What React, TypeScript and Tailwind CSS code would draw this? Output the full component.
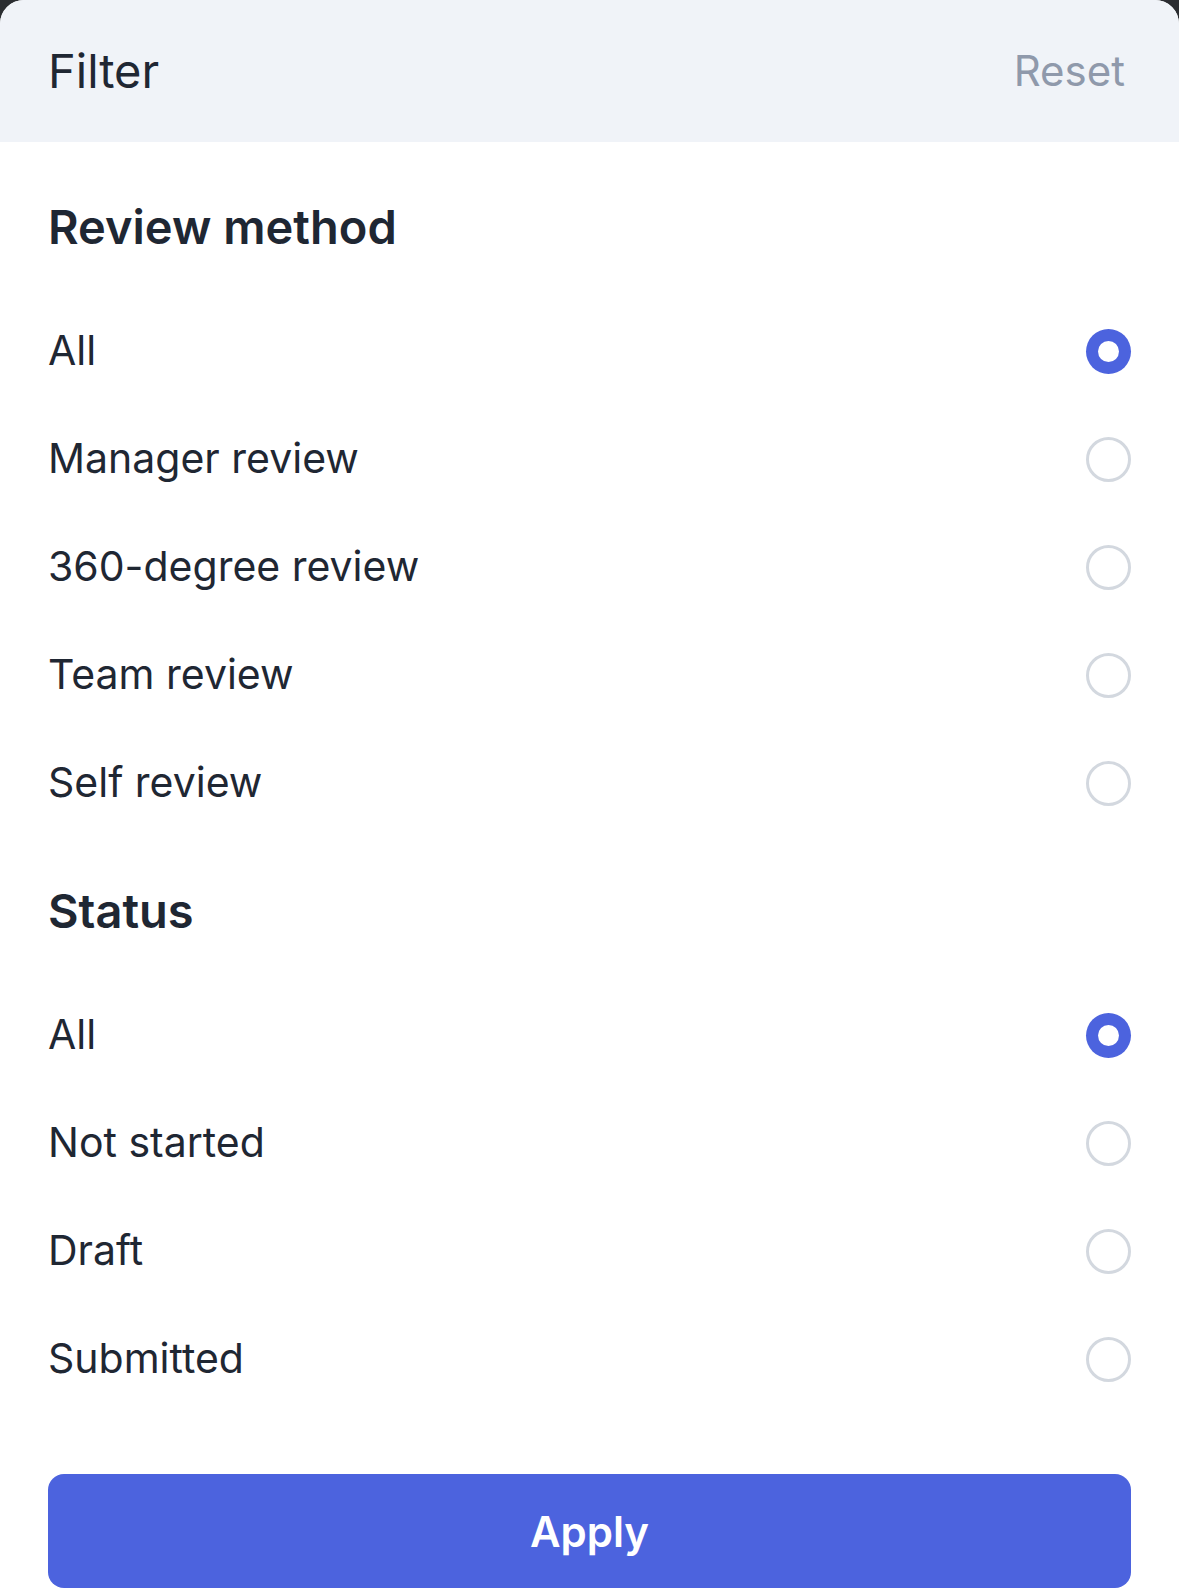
import { useState } from "react";

const METHODS = ["All", "Manager review", "360-degree review", "Team review", "Self review"];
const STATUSES = ["All", "Not started", "Draft", "Submitted"];

function Radio({ checked }: { checked: boolean }) {
  return checked ? (
    <span className="flex items-center justify-center w-[45px] h-[45px] rounded-full bg-[#4c63de]">
      <span className="w-[21px] h-[21px] rounded-full bg-white" />
    </span>
  ) : (
    <span className="block w-[45px] h-[45px] rounded-full border-[3px] border-[#d3d8df]" />
  );
}

function Group({
  title,
  options,
  value,
  onChange,
  className,
}: {
  title: string;
  options: string[];
  value: string;
  onChange: (v: string) => void;
  className?: string;
}) {
  return (
    <section className={className}>
      <h2 className="text-[47px] leading-[60px] font-semibold text-[#1f2733] mb-[40px]">{title}</h2>
      <ul className="flex flex-col">
        {options.map((opt) => (
          <li
            key={opt}
            onClick={() => onChange(opt)}
            className="flex items-center justify-between h-[108px] cursor-pointer"
          >
            <span className="text-[41px] leading-[50px] text-[#1f2733] -mt-[3px]">{opt}</span>
            <Radio checked={value === opt} />
          </li>
        ))}
      </ul>
    </section>
  );
}

export default function App() {
  const [method, setMethod] = useState("All");
  const [status, setStatus] = useState("All");

  return (
    <div className="min-h-screen bg-[#2b2d31] font-['Inter',sans-serif]">
      <div className="bg-white rounded-t-[24px] overflow-hidden min-h-[1596px]">
        {/* Header */}
        <header className="h-[142px] bg-[#f0f3f8] pl-[48px] pr-[49px] flex items-center justify-between">
          <h1 className="text-[47px] text-[#1f2733]">Filter</h1>
          <button
            className="text-[42px] text-[#8f99ab] mr-[5px] -mt-[2px]"
            onClick={() => {
              setMethod("All");
              setStatus("All");
            }}
          >
            Reset
          </button>
        </header>

        <div className="px-[48px] pt-[55px] pb-[8px]">
          <Group title="Review method" options={METHODS} value={method} onChange={setMethod} />
          <Group
            title="Status"
            options={STATUSES}
            value={status}
            onChange={setStatus}
            className="mt-[44px]"
          />
          <button className="mt-[61px] w-full h-[114px] rounded-[16px] bg-[#4c63de] text-white text-[42px] font-semibold">
            Apply
          </button>
        </div>
      </div>
    </div>
  );
}
